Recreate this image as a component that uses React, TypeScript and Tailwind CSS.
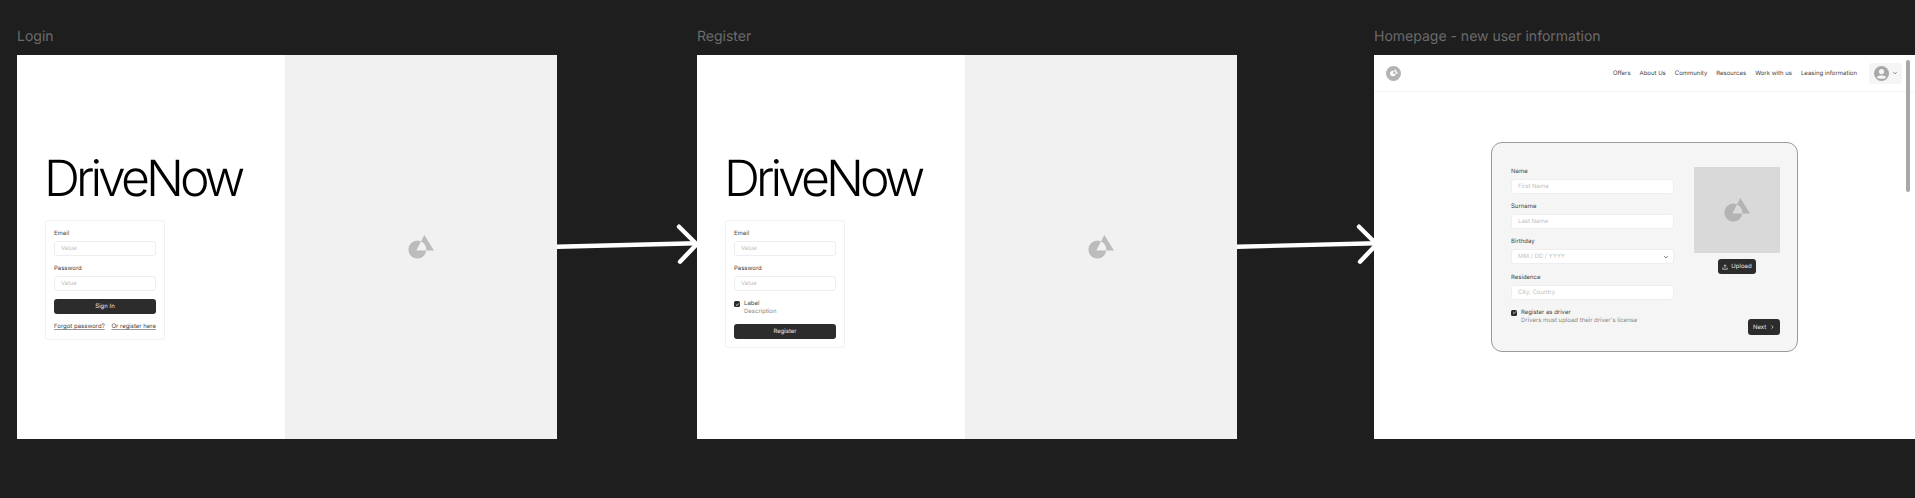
import React from "react";

const font = { fontFamily: "Inter, 'Liberation Sans', sans-serif" };

function Mark({ width = 26, color = "#bcbcbc" }: { width?: number; color?: string }) {
  return (
    <svg width={width} height={(width * 68) / 75} viewBox="0 0 75 68" fill="none">
      <path
        fillRule="evenodd"
        clipRule="evenodd"
        fill={color}
        d="M1 42 A26 26 0 1 0 53 42 A26 26 0 1 0 1 42 Z M47 0 L75 45 L24 45 Z"
      />
    </svg>
  );
}

function Field({ label, value, select }: { label: string; value: string; select?: boolean }) {
  return (
    <div className="flex flex-col gap-[3px]">
      <div className="text-[6px] leading-[9px] text-[#444444]">{label}</div>
      <div className="h-[15px] rounded-[3px] border border-[#eeeeee] bg-white pl-[6px] pr-[4px] flex items-center justify-between text-[6px] text-[#c0c0c0]">
        <span>{value}</span>
        {select && (
          <svg width="6" height="6" viewBox="0 0 6 6" fill="none">
            <path d="M1.3 2.2 L3 3.9 L4.7 2.2" stroke="#444" strokeWidth="0.8" />
          </svg>
        )}
      </div>
    </div>
  );
}

function Check() {
  return (
    <div className="w-[6px] h-[6px] rounded-[1.5px] bg-[#2c2c2c] flex items-center justify-center shrink-0 mt-[1px]">
      <svg width="5" height="5" viewBox="0 0 5 5" fill="none">
        <path d="M1 2.6 L2.1 3.6 L4 1.3" stroke="#fff" strokeWidth="0.7" />
      </svg>
    </div>
  );
}

function Button({ label }: { label: string }) {
  return (
    <div className="h-[15px] rounded-[3px] bg-[#2c2c2c] text-[#e8e8e8] text-[6px] flex items-center justify-center">
      {label}
    </div>
  );
}

function Frame({ title, width, children }: { title: string; width: string; children: React.ReactNode }) {
  return (
    <div className={`flex flex-col shrink-0 ${width}`}>
      <div className="h-[55px] flex items-end pb-[9px] text-[14px] leading-[18px] text-[#6b6b6b]">{title}</div>
      <div className="h-[384px] bg-white overflow-hidden">{children}</div>
    </div>
  );
}

function AuthFrame({ children }: { children: React.ReactNode }) {
  return (
    <div className="h-full flex">
      <div className="w-[268px] pl-[28px] pt-[94px]">
        <div className="text-[50px] leading-[60px] tracking-[-4px] font-[350] text-black h-[71px] -ml-[1px]">DriveNow</div>
        <div className="w-[120px] rounded-[3px] border border-[#f0f0f0] bg-white p-[8px] flex flex-col gap-[8px]">
          {children}
        </div>
      </div>
      <div className="flex-1 bg-[#f1f1f1] flex items-center justify-center">
        <Mark width={26} />
      </div>
    </div>
  );
}

function Arrow({ left }: { left: string }) {
  return (
    <svg className={`absolute top-[219px] ${left}`} width="142" height="50" viewBox="0 0 142 50" fill="none">
      <path d="M0 27.7 L139 24.3" stroke="#fff" strokeWidth="4.4" />
      <path d="M122 7.7 L139.7 25.3 L123 42.7" stroke="#fff" strokeWidth="4.4" strokeLinecap="round" strokeLinejoin="round" />
    </svg>
  );
}

const nav = ["Offers", "About Us", "Community", "Resources", "Work with us", "Leasing information"];

export default function App() {
  return (
    <div style={font} className="relative w-[1915px] h-[498px] bg-[#1e1e1e] overflow-hidden flex pl-[17px] [text-rendering:geometricPrecision]">
      <Frame title="Login" width="w-[540px] mr-[140px]">
        <AuthFrame>
          <Field label="Email" value="Value" />
          <Field label="Password" value="Value" />
          <Button label="Sign In" />
          <div className="flex justify-between text-[6px] leading-[8px] text-[#444444] mt-[1px]">
            <span className="underline underline-offset-1 decoration-[#999999]">Forgot password?</span>
            <span className="underline underline-offset-1 decoration-[#999999]">Or register here</span>
          </div>
        </AuthFrame>
      </Frame>
      <Frame title="Register" width="w-[540px] mr-[137px]">
        <AuthFrame>
          <Field label="Email" value="Value" />
          <Field label="Password" value="Value" />
          <div className="flex gap-[4px] text-[6px] leading-[8px] mt-[1px]">
            <Check />
            <div className="flex flex-col">
              <span className="text-[#444444]">Label</span>
              <span className="text-[#888888]">Description</span>
            </div>
          </div>
          <Button label="Register" />
        </AuthFrame>
      </Frame>
      <Frame title="Homepage - new user information" width="w-[541px]">
        <div className="relative h-full flex flex-col">
          <div className="h-[37px] border-b border-[#f5f5f5] flex items-center pl-[12px] pr-[13px] shrink-0">
            <div className="w-[15px] h-[15px] rounded-full bg-[#b3b3b3] flex items-center justify-center">
              <Mark width={8} color="#ffffff" />
            </div>
            <div className="ml-auto flex items-center gap-[9px] text-[6px] text-[#444444]">
              {nav.map((n) => (
                <span key={n}>{n}</span>
              ))}
            </div>
            <div className="ml-[12px] w-[33px] h-[21px] rounded-[3px] bg-[#f5f5f5] flex items-center justify-center gap-[3px]">
              <svg width="15" height="15" viewBox="0 0 15 15">
                <circle cx="7.5" cy="7.5" r="7.5" fill="#a8a8a8" />
                <circle cx="7.5" cy="5.6" r="2.6" fill="#f5f5f5" />
                <path d="M2.8 11.2 C4 9 11 9 12.2 11.2 C10.5 13.2 4.5 13.2 2.8 11.2 Z" fill="#f5f5f5" />
              </svg>
              <svg width="6" height="6" viewBox="0 0 6 6" fill="none">
                <path d="M1.5 2.3 L3 3.8 L4.5 2.3" stroke="#555" strokeWidth="0.8" />
              </svg>
            </div>
          </div>
          <div className="flex-1 flex justify-center pt-[50px]">
            <div className="w-[307px] h-[210px] rounded-[11px] border border-[#9a9a9a] bg-[#f5f5f5] flex pl-[19px] pr-[17px] pt-[24px]">
              <div className="w-[163px] flex flex-col gap-[8px]">
                <div className="flex flex-col gap-[8.2px]">
                  <Field label="Name" value="First Name" />
                  <Field label="Surname" value="Last Name" />
                  <Field label="Birthday" value="MM / DD / YYYY" select />
                  <Field label="Residence" value="City, Country" />
                </div>
                <div className="flex gap-[4px] text-[6px] leading-[8px] mt-[1px]">
                  <Check />
                  <div className="flex flex-col">
                    <span className="text-[#444444]">Register as driver</span>
                    <span className="text-[#888888]">Drivers must upload their driver's license</span>
                  </div>
                </div>
              </div>
              <div className="ml-auto w-[86px] flex flex-col items-center">
                <div className="w-[86px] h-[86px] bg-[#d9d9d9] flex items-center justify-center">
                  <Mark width={26} color="#b3b3b3" />
                </div>
                <div className="mt-[6px] w-[38px] h-[15px] rounded-[3px] bg-[#2c2c2c] text-[#e8e8e8] text-[6px] flex items-center justify-center gap-[3px]">
                  <svg width="6" height="6" viewBox="0 0 6 6" fill="none">
                    <path d="M3 3.8 V0.9 M1.7 2.1 L3 0.8 L4.3 2.1 M0.7 3.7 V5.2 H5.3 V3.7" stroke="#e8e8e8" strokeWidth="0.7" />
                  </svg>
                  <span>Upload</span>
                </div>
                <div className="mt-[45px] self-end w-[32px] h-[16px] rounded-[3px] bg-[#2c2c2c] text-[#e8e8e8] text-[6px] flex items-center justify-center gap-[4px]">
                  <span>Next</span>
                  <svg width="5" height="6" viewBox="0 0 5 6" fill="none">
                    <path d="M1.5 1.3 L3.2 3 L1.5 4.7" stroke="#e8e8e8" strokeWidth="0.7" />
                  </svg>
                </div>
              </div>
            </div>
          </div>
          <div className="absolute right-[5px] top-[5px] w-[4px] h-[132px] rounded-full bg-[#a8a8a8]" />
        </div>
      </Frame>
      <Arrow left="left-[557px]" />
      <Arrow left="left-[1237px]" />
    </div>
  );
}
